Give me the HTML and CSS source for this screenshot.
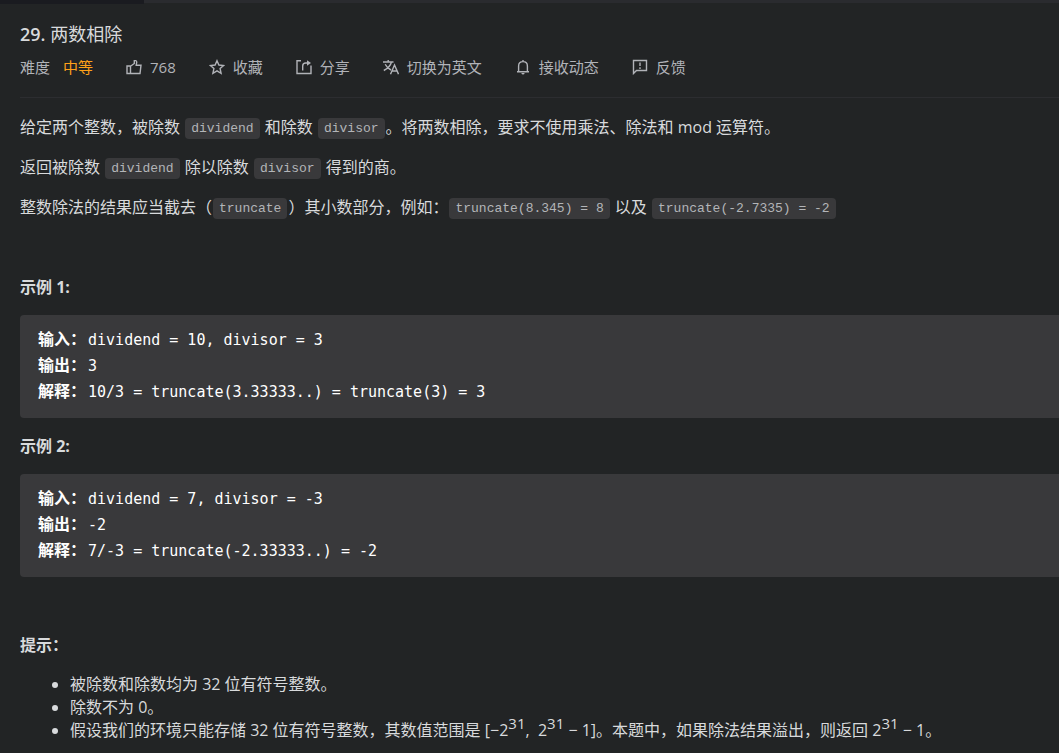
FILE: index.html
```html
<!DOCTYPE html>
<html lang="zh-CN">
<head>
    <meta charset="UTF-8">
    <meta name="viewport" content="width=device-width, initial-scale=1.0">
    <title>29. 两数相除</title>
    <link rel="stylesheet" href="styles.css">
</head>
<body>
    <div class="tabs">
        <div class="tab active"></div>
        <div class="tab rest"></div>
    </div>
    <main class="question">
        <header class="head">
            <h1>29. <span>两数相除</span></h1>
            <div class="tools">
                <div class="level">难度<span>中等</span></div>
                <button class="tool">
                    <svg class="icon" viewBox="0 0 16 16"><path d="M1 7h3.500v7.500H1zM4.500 7.300L8.300 4.500V1.600h1.500q1 .4 .9 1.700L10.200 6.200H15L14 14.500H4.500"/></svg>
                    768
                </button>
                <button class="tool">
                    <svg class="icon" viewBox="0 0 16 16"><path d="M8 1.700l1.900 4.300 4.700 .5-3.500 3.100 1 4.700L8 11.900l-4.100 2.400 1-4.700L1.400 6.500l4.700-.5z"/></svg>
                    收藏
                </button>
                <button class="tool">
                    <svg class="icon" viewBox="0 0 16 16"><path d="M5 1.700H1v12.800h14V6.500M6.700 11.500V7q0-3 3-3H12"/><path class="fill" d="M11 1.200L15 4 11 6.800z"/></svg>
                    分享
                </button>
                <button class="tool">
                    <svg class="icon" viewBox="0 0 16 16"><path d="M0 3h10.500M5.200 1v2M2.200 5.200Q4 9 8 11M8.500 3Q7 8.500 .8 11.500M7.500 15.200L11.500 6l4 9.200M9 12h5"/></svg>
                    切换为英文
                </button>
                <button class="tool">
                    <svg class="icon" viewBox="0 0 16 16"><path d="M2 12.700h12M3.600 12.500V7q0-4.400 4.400-4.400T12.400 7v5.500M8 1v1.500"/><path class="fill" d="M6.300 14h3.400q-.4 1.500-1.700 1.500T6.300 14z"/></svg>
                    接收动态
                </button>
                <button class="tool">
                    <svg class="icon" viewBox="0 0 16 16"><path d="M1.500 14.500V1.500h13v10h-10zM8 3.500v3.500M8 8.300v1.700"/></svg>
                    反馈
                </button>
            </div>
        </header>

        <div class="content">
            <p>给定两个整数，被除数 <code>dividend</code> 和除数 <code>divisor</code>。将两数相除，要求不使用乘法、除法和 mod 运算符。</p>
            <p>返回被除数 <code>dividend</code> 除以除数 <code>divisor</code> 得到的商。</p>
            <p>整数除法的结果应当截去（<code>truncate</code>）其小数部分，例如：<code>truncate(8.345) = 8</code> 以及 <code>truncate(-2.7335) = -2</code></p>
            <p>&nbsp;</p>
            <p><strong>示例&nbsp;1:</strong></p>
<pre><strong>输入：</strong>dividend = 10, divisor = 3
<strong>输出：</strong>3
<strong>解释：</strong>10/3 = truncate(3.33333..) = truncate(3) = 3</pre>
            <p><strong>示例&nbsp;2:</strong></p>
<pre><strong>输入：</strong>dividend = 7, divisor = -3
<strong>输出：</strong>-2
<strong>解释：</strong>7/-3 = truncate(-2.33333..) = -2</pre>
            <p>&nbsp;</p>
            <p><strong>提示：</strong></p>
            <ul>
                <li>被除数和除数均为 32 位有符号整数。</li>
                <li>除数不为&nbsp;0。</li>
                <li>假设我们的环境只能存储 32 位有符号整数，其数值范围是 [−2<sup>31</sup>,&nbsp; 2<sup>31</sup>&nbsp;− 1]。本题中，如果除法结果溢出，则返回 2<sup>31</sup>&nbsp;− 1。</li>
            </ul>
        </div>
    </main>
</body>
</html>
```
FILE: styles.css
```css
body{
    margin: 0;
    background: #222425;
    color: #d8dadc;
    font-family: "Open Sans", "Noto Sans CJK SC", sans-serif;
    font-size: 16px;
    line-height: 24px;
}
.tabs{
    display: flex;
    height: 4px;
}
.tab.active{
    width: 144px;
    background: #1a1b20;
}
.tab.rest{
    flex: 1;
    height: 3px;
    background: #2a2b2f;
}
.question{
    padding-left: 20px;
}
.head{
    padding: 17px 0 18px;
    border-bottom: 1px solid #2c2d30;
}
h1{
    margin: 0 0 8px;
    font-size: 18px;
    line-height: 26px;
    font-weight: 600;
}
h1 span{
    font-weight: 400;
}
.tools{
    display: flex;
    align-items: center;
    gap: 33px;
    font-size: 15px;
    color: #b1b3b8;
}
.level{
    display: flex;
    gap: 13px;
}
.level span{
    color: #ffa119;
}
.tool{
    display: flex;
    align-items: center;
    gap: 8px;
    padding: 0;
    border: none;
    background: none;
    color: inherit;
    font: inherit;
    cursor: pointer;
}
.icon{
    width: 16px;
    height: 16px;
    fill: none;
    stroke: #b1b3b8;
    stroke-width: 1.4;
}
.icon .fill{
    fill: #b1b3b8;
    stroke: none;
}
.content{
    padding-top: 17px;
}
p{
    margin: 0 0 16px;
}
code{
    margin: 0 1px;
    padding: 3px 6px;
    border-radius: 4px;
    background: #39393b;
    color: #b3b5b8;
    font-family: "Liberation Mono", monospace;
    font-size: 13px;
    line-height: 16px;
    vertical-align: 1px;
}
pre{
    margin: 0 0 16px;
    padding: 12px 18px 13px;
    border-radius: 4px 0 0 4px;
    background: #39393b;
    color: #fff;
    font-family: "DejaVu Sans Mono", "Noto Sans CJK SC", monospace;
    font-size: 15px;
    line-height: 26px;
}
pre strong{
    margin-right: 2px;
    font-size: 16px;
    line-height: 24px;
}
ul{
    margin: 0;
    padding-left: 50px;
    line-height: 23px;
}
sup{
    font-size: 15px;
    line-height: 0;
    vertical-align: 7px;
}
```
